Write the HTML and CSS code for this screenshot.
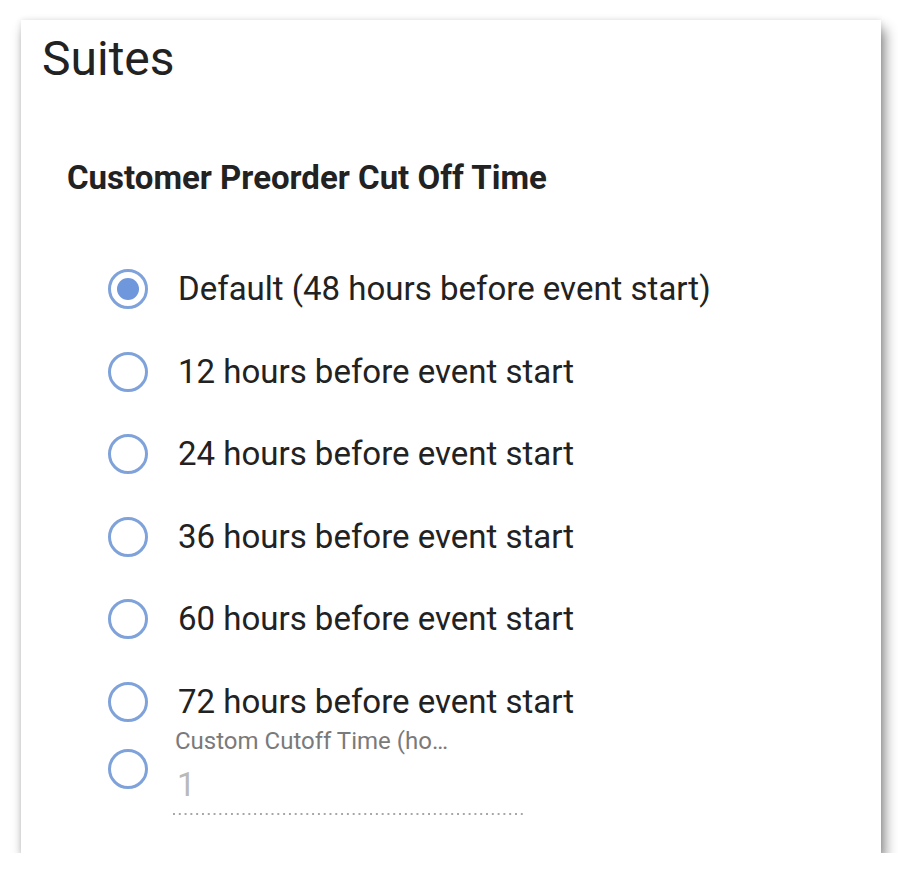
FILE: index.html
```html
<!DOCTYPE html>
<html lang="en">
<head>
    <meta charset="UTF-8">
    <meta name="viewport" content="width=device-width, initial-scale=1.0">
    <title>Suites</title>
    <link rel="stylesheet" href="styles.css">
</head>

<body>
    <div class="card">
        <h1 class="card-title">Suites</h1>

        <div class="section">
            <h3 class="section-title">Customer Preorder Cut Off Time</h3>

            <div class="options">
                <label class="option">
                    <span class="radio checked"></span>
                    <span class="option-text">Default (48 hours before event start)</span>
                </label>
                <label class="option">
                    <span class="radio"></span>
                    <span class="option-text">12 hours before event start</span>
                </label>
                <label class="option">
                    <span class="radio"></span>
                    <span class="option-text">24 hours before event start</span>
                </label>
                <label class="option">
                    <span class="radio"></span>
                    <span class="option-text">36 hours before event start</span>
                </label>
                <label class="option">
                    <span class="radio"></span>
                    <span class="option-text">60 hours before event start</span>
                </label>
                <label class="option">
                    <span class="radio"></span>
                    <span class="option-text">72 hours before event start</span>
                </label>
                <div class="option custom">
                    <span class="radio"></span>
                    <div class="field">
                        <span class="field-label">Custom Cutoff Time (ho…</span>
                        <span class="field-value">1</span>
                    </div>
                </div>
            </div>
        </div>
    </div>
</body>
</html>
```

FILE: styles.css
```css
body {
    margin: 0;
    padding: 20px 17px 0 21px;
    background-color: #ffffff;
    font-family: Roboto, "Liberation Sans", Arial, sans-serif;
    color: #222222;
}

.card {
    height: 833px;
    box-sizing: border-box;
    background-color: #ffffff;
    padding: 11px 21px 0 21px;
    box-shadow: 4px 9px 12px rgba(0, 0, 0, 0.45), 0 0 6px rgba(0, 0, 0, 0.1);
}

.card-title {
    margin: 0;
    font-size: 48px;
    font-weight: 400;
    line-height: 56px;
    color: #222222;
}

.section {
    padding-left: 25px;
}

.section-title {
    margin: 71px 0 0 0;
    font-size: 33px;
    font-weight: 700;
    line-height: 40px;
    color: #222222;
}

.options {
    display: flex;
    flex-direction: column;
    margin-top: 71px;
    padding-left: 41px;
}

.option {
    display: flex;
    align-items: center;
    gap: 30px;
    height: 40px;
    margin-bottom: 42.6px;
}

.radio {
    flex: none;
    width: 34px;
    height: 34px;
    border: 3px solid #7ea2d9;
    border-radius: 50%;
    position: relative;
}

.radio.checked::after {
    content: "";
    position: absolute;
    top: 6px;
    left: 6px;
    width: 22px;
    height: 22px;
    border-radius: 50%;
    background-color: #6f97dc;
}

.option-text {
    font-size: 33px;
    line-height: 40px;
    color: #222222;
}

.option.custom {
    margin-top: -38px;
    height: auto;
    align-items: flex-start;
    gap: 25px;
}

.option.custom .radio {
    margin-top: 22px;
}

.field {
    display: flex;
    flex-direction: column;
    width: 350px;
    padding-bottom: 8px;
    background-image: linear-gradient(to right, #a6a6a6 2px, transparent 2px);
    background-size: 5.8px 2px;
    background-repeat: repeat-x;
    background-position: left bottom;
}

.field-label {
    font-size: 24px;
    line-height: 28px;
    color: #7a7a7a;
    padding-left: 2px;
}

.field-value {
    margin-top: 8px;
    font-size: 33px;
    line-height: 44px;
    color: #b9b9b9;
    padding-left: 4px;
}
```
